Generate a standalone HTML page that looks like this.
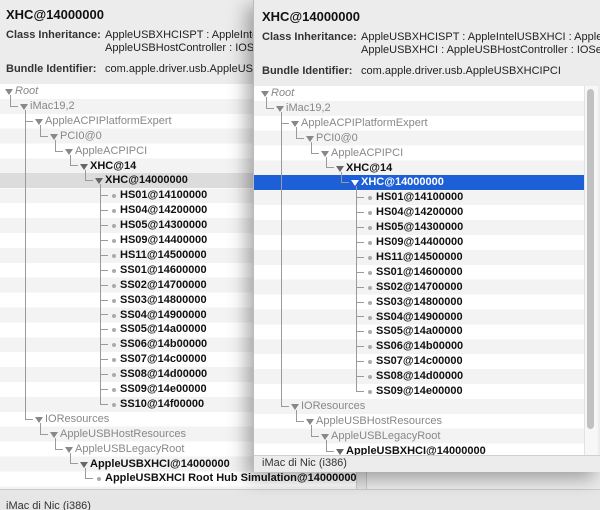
<!DOCTYPE html>
<html><head><meta charset="utf-8"><style>
*{margin:0;padding:0;box-sizing:border-box}
html,body{width:600px;height:510px;overflow:hidden}
body{background:#e8e8e8;font-family:"Liberation Sans",sans-serif;font-size:11px;color:#222;position:relative}
.abs{position:absolute}
.title{font-weight:bold;font-size:13px;color:#111}
.lab{font-weight:bold;color:#333}
.tree{position:absolute;overflow:hidden;background:repeating-linear-gradient(#fff 0,#fff 14.9px,#f3f3f3 14.9px,#f3f3f3 29.8px)}
.t{position:absolute;left:calc(var(--x0) + var(--d)*15px);top:calc(var(--i)*14.9px);line-height:14.9px;white-space:nowrap;color:#888}
.t::before{content:"";position:absolute;left:-10px;top:5px;border-left:4px solid transparent;border-right:4px solid transparent;border-top:6px solid #888}
.t.b{font-weight:bold;color:#111}
.t.b::before{border-top-color:#666}
.t.lf::before{border:none;width:4px;height:4px;border-radius:2px;background:#aaa;left:-8px;top:6px}
.t.i{font-style:italic}
.t.w{color:#fff}
.t.w::before{border-top-color:#fff}
.L{position:absolute;left:calc(var(--x0) - 5px + (var(--d) - 1)*15px);top:calc(var(--p)*14.9px + 11px);height:calc((var(--i) - var(--p))*14.9px - 3px);width:8px;border-left:1px solid #9a9a9a;border-bottom:1px solid #9a9a9a}
.hl{position:absolute;left:0;height:14.9px;top:calc(6*14.9px)}
#clip{position:absolute;left:0;top:0;width:600px;height:510px;overflow:hidden}
</style></head><body><div id="clip">
<!-- back window -->
<div class="abs" style="left:0;top:0;width:600px;height:84px;background:#ececec"></div>
<div class="abs title" style="left:6px;top:7px">XHC@14000000</div>
<div class="abs lab" style="left:6px;top:29px">Class Inheritance:</div>
<div class="abs" style="left:105px;top:29px;line-height:13px">AppleUSBXHCISPT : AppleIntelUSBXHCI<br>AppleUSBHostController : IOService</div>
<div class="abs lab" style="left:6px;top:63px">Bundle Identifier:</div>
<div class="abs" style="left:105px;top:63px">com.apple.driver.usb.AppleUSBXHCIPCI</div>
<div class="abs" style="left:356px;top:84px;width:244px;height:406px;background:#e4e4e4;border-left:1px solid #ccc"></div>
<div class="abs" style="left:366px;top:470px;width:234px;height:20px;border-left:1px solid #c8c8c8;border-top:1px solid #c8c8c8;background:#ececec"></div>
<div class="tree" style="left:0;top:84px;width:356px;height:405px;--x0:15px">
<div class="hl" style="width:356px;background:#dcdcdc"></div>
<div class="L" style="--d:1;--p:0;--i:1"></div>
<div class="L" style="--d:2;--p:1;--i:2"></div><div class="L" style="--d:2;--p:1;--i:22"></div>
<div class="L" style="--d:3;--p:2;--i:3"></div><div class="L" style="--d:4;--p:3;--i:4"></div>
<div class="L" style="--d:5;--p:4;--i:5"></div><div class="L" style="--d:6;--p:5;--i:6"></div>
<div class="L" style="--d:7;--p:6;--i:7"></div><div class="L" style="--d:7;--p:6;--i:8"></div><div class="L" style="--d:7;--p:6;--i:9"></div><div class="L" style="--d:7;--p:6;--i:10"></div><div class="L" style="--d:7;--p:6;--i:11"></div><div class="L" style="--d:7;--p:6;--i:12"></div><div class="L" style="--d:7;--p:6;--i:13"></div><div class="L" style="--d:7;--p:6;--i:14"></div><div class="L" style="--d:7;--p:6;--i:15"></div><div class="L" style="--d:7;--p:6;--i:16"></div><div class="L" style="--d:7;--p:6;--i:17"></div><div class="L" style="--d:7;--p:6;--i:18"></div><div class="L" style="--d:7;--p:6;--i:19"></div><div class="L" style="--d:7;--p:6;--i:20"></div><div class="L" style="--d:7;--p:6;--i:21"></div>
<div class="L" style="--d:3;--p:22;--i:23"></div><div class="L" style="--d:4;--p:23;--i:24"></div><div class="L" style="--d:5;--p:24;--i:25"></div><div class="L" style="--d:6;--p:25;--i:26"></div>
<div class="t i" style="--d:0;--i:0">Root</div>
<div class="t" style="--d:1;--i:1">iMac19,2</div>
<div class="t" style="--d:2;--i:2">AppleACPIPlatformExpert</div>
<div class="t" style="--d:3;--i:3">PCI0@0</div>
<div class="t" style="--d:4;--i:4">AppleACPIPCI</div>
<div class="t b" style="--d:5;--i:5">XHC@14</div>
<div class="t b" style="--d:6;--i:6">XHC@14000000</div>
<div class="t b lf" style="--d:7;--i:7">HS01@14100000</div>
<div class="t b lf" style="--d:7;--i:8">HS04@14200000</div>
<div class="t b lf" style="--d:7;--i:9">HS05@14300000</div>
<div class="t b lf" style="--d:7;--i:10">HS09@14400000</div>
<div class="t b lf" style="--d:7;--i:11">HS11@14500000</div>
<div class="t b lf" style="--d:7;--i:12">SS01@14600000</div>
<div class="t b lf" style="--d:7;--i:13">SS02@14700000</div>
<div class="t b lf" style="--d:7;--i:14">SS03@14800000</div>
<div class="t b lf" style="--d:7;--i:15">SS04@14900000</div>
<div class="t b lf" style="--d:7;--i:16">SS05@14a00000</div>
<div class="t b lf" style="--d:7;--i:17">SS06@14b00000</div>
<div class="t b lf" style="--d:7;--i:18">SS07@14c00000</div>
<div class="t b lf" style="--d:7;--i:19">SS08@14d00000</div>
<div class="t b lf" style="--d:7;--i:20">SS09@14e00000</div>
<div class="t b lf" style="--d:7;--i:21">SS10@14f00000</div>
<div class="t" style="--d:2;--i:22">IOResources</div>
<div class="t" style="--d:3;--i:23">AppleUSBHostResources</div>
<div class="t" style="--d:4;--i:24">AppleUSBLegacyRoot</div>
<div class="t b" style="--d:5;--i:25">AppleUSBXHCI@14000000</div>
<div class="t b lf" style="--d:6;--i:26">AppleUSBXHCI Root Hub Simulation@14000000</div>
</div>
<div class="abs" style="left:0;top:489px;width:600px;height:21px;background:#e6e6e6;border-top:1px solid #ccc"></div>
<div class="abs" style="left:6px;top:500px;color:#333">iMac di Nic (i386)</div>

<!-- front window -->
<div class="abs" style="left:253px;top:0;width:347px;height:472px;background:#ececec;box-shadow:-6px 6px 18px rgba(0,0,0,.35);border-left:1px solid #bbb"></div>
<div class="abs title" style="left:262px;top:9px">XHC@14000000</div>
<div class="abs lab" style="left:262px;top:31px">Class Inheritance:</div>
<div class="abs" style="left:361px;top:31px;width:239px;overflow:hidden;line-height:13px;white-space:nowrap">AppleUSBXHCISPT : AppleIntelUSBXHCI : AppleUSBXHCI<br>AppleUSBXHCI : AppleUSBHostController : IOService</div>
<div class="abs lab" style="left:262px;top:65px">Bundle Identifier:</div>
<div class="abs" style="left:361px;top:65px">com.apple.driver.usb.AppleUSBXHCIPCI</div>
<div class="tree" style="left:254px;top:86px;width:330px;height:369px;--x0:17px">
<div class="hl" style="width:330px;background:#1c5fd6"></div>
<div class="L" style="--d:1;--p:0;--i:1"></div>
<div class="L" style="--d:2;--p:1;--i:2"></div><div class="L" style="--d:2;--p:1;--i:21"></div>
<div class="L" style="--d:3;--p:2;--i:3"></div><div class="L" style="--d:4;--p:3;--i:4"></div>
<div class="L" style="--d:5;--p:4;--i:5"></div><div class="L" style="--d:6;--p:5;--i:6"></div>
<div class="L" style="--d:7;--p:6;--i:7"></div><div class="L" style="--d:7;--p:6;--i:8"></div><div class="L" style="--d:7;--p:6;--i:9"></div><div class="L" style="--d:7;--p:6;--i:10"></div><div class="L" style="--d:7;--p:6;--i:11"></div><div class="L" style="--d:7;--p:6;--i:12"></div><div class="L" style="--d:7;--p:6;--i:13"></div><div class="L" style="--d:7;--p:6;--i:14"></div><div class="L" style="--d:7;--p:6;--i:15"></div><div class="L" style="--d:7;--p:6;--i:16"></div><div class="L" style="--d:7;--p:6;--i:17"></div><div class="L" style="--d:7;--p:6;--i:18"></div><div class="L" style="--d:7;--p:6;--i:19"></div><div class="L" style="--d:7;--p:6;--i:20"></div>
<div class="L" style="--d:3;--p:21;--i:22"></div><div class="L" style="--d:4;--p:22;--i:23"></div><div class="L" style="--d:5;--p:23;--i:24"></div>
<div class="t i" style="--d:0;--i:0">Root</div>
<div class="t" style="--d:1;--i:1">iMac19,2</div>
<div class="t" style="--d:2;--i:2">AppleACPIPlatformExpert</div>
<div class="t" style="--d:3;--i:3">PCI0@0</div>
<div class="t" style="--d:4;--i:4">AppleACPIPCI</div>
<div class="t b" style="--d:5;--i:5">XHC@14</div>
<div class="t b w" style="--d:6;--i:6">XHC@14000000</div>
<div class="t b lf" style="--d:7;--i:7">HS01@14100000</div>
<div class="t b lf" style="--d:7;--i:8">HS04@14200000</div>
<div class="t b lf" style="--d:7;--i:9">HS05@14300000</div>
<div class="t b lf" style="--d:7;--i:10">HS09@14400000</div>
<div class="t b lf" style="--d:7;--i:11">HS11@14500000</div>
<div class="t b lf" style="--d:7;--i:12">SS01@14600000</div>
<div class="t b lf" style="--d:7;--i:13">SS02@14700000</div>
<div class="t b lf" style="--d:7;--i:14">SS03@14800000</div>
<div class="t b lf" style="--d:7;--i:15">SS04@14900000</div>
<div class="t b lf" style="--d:7;--i:16">SS05@14a00000</div>
<div class="t b lf" style="--d:7;--i:17">SS06@14b00000</div>
<div class="t b lf" style="--d:7;--i:18">SS07@14c00000</div>
<div class="t b lf" style="--d:7;--i:19">SS08@14d00000</div>
<div class="t b lf" style="--d:7;--i:20">SS09@14e00000</div>
<div class="t" style="--d:2;--i:21">IOResources</div>
<div class="t" style="--d:3;--i:22">AppleUSBHostResources</div>
<div class="t" style="--d:4;--i:23">AppleUSBLegacyRoot</div>
<div class="t b" style="--d:5;--i:24">AppleUSBXHCI@14000000</div>
</div>
<div class="abs" style="left:584px;top:86px;width:14px;height:369px;background:#f7f7f7;border-left:1px solid #e2e2e2"></div>
<div class="abs" style="left:587px;top:89px;width:7px;height:340px;background:#c1c1c1;border-radius:4px"></div>
<div class="abs" style="left:254px;top:455px;width:346px;height:17px;background:#ececec;border-top:1px solid #d0d0d0"></div>
<div class="abs" style="left:262px;top:457px;color:#333">iMac di Nic (i386)</div>
</div></body></html>
